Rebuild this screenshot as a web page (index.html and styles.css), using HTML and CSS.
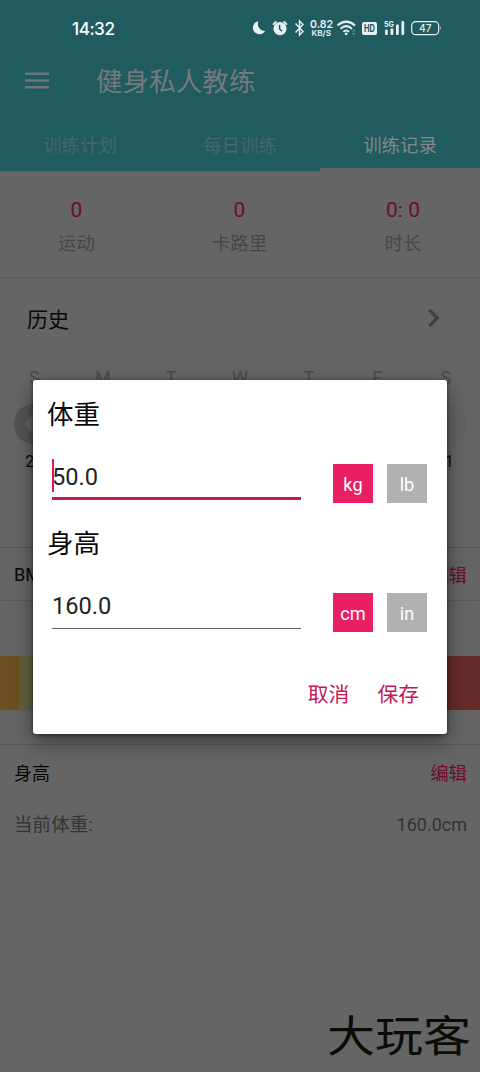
FILE: index.html
```html
<!DOCTYPE html>
<html lang="zh-CN">
<head>
<meta charset="utf-8">
<title>健身私人教练</title>
<link rel="stylesheet" href="styles.css">
</head>
<body>
<div class="screen">
  <header class="header">
    <div class="status">
      <span class="clock">14:32</span>
      <svg class="status-icons" width="210" height="24" viewBox="0 0 210 24">
        <g fill="#e6f1f2">
          <path d="M10.3 5.2A6.6 6.6 0 1 0 17.2 15A7.2 7.2 0 0 1 10.3 5.2Z"/>
          <circle cx="32" cy="12.6" r="6.6"/>
          <path d="M25 8.7L28.5 5.3M35.5 5.3L39 8.7" stroke="#e6f1f2" stroke-width="1.8" fill="none"/>
          <path d="M31.6 8.8V13L34 15.2" stroke="#205b60" stroke-width="1.5" fill="none"/>
          <path d="M47.5 7.5L55 15.5L51.5 19V5L55 8.5L47.5 16.5" stroke="#e6f1f2" stroke-width="1.4" fill="none"/>
          <text x="62" y="12" class="net" textLength="23" lengthAdjust="spacingAndGlyphs">0.82</text>
          <text x="63.5" y="20" class="unit" textLength="19.5" lengthAdjust="spacingAndGlyphs">KB/S</text>
          <g fill="none" stroke="#e6f1f2" stroke-width="2">
            <path d="M89.5 9.5Q98.2 1.8 107 9.5"/>
            <path d="M92.5 12.7Q98.2 7.6 104 12.7"/>
            <path d="M95.3 15.7Q98.2 13.2 101 15.7"/>
          </g>
          <circle cx="98.2" cy="17.8" r="1.4"/>
          <path d="M103.7 15.5L105.7 13L107.7 15.5ZM103.7 17L105.7 19.5L107.7 17Z" opacity=".3"/>
          <rect x="114" y="6" width="15" height="13" rx="2"/>
          <text x="116" y="16.2" class="hd" textLength="11" lengthAdjust="spacingAndGlyphs">HD</text>
          <text x="136" y="11" class="gen" textLength="10" lengthAdjust="spacingAndGlyphs">5G</text>
          <rect x="137" y="13.5" width="2.8" height="5.5" rx="1"/>
          <rect x="142.5" y="12.5" width="2.8" height="6.5" rx="1"/>
          <rect x="148" y="8.5" width="2.8" height="10.5" rx="1"/>
          <rect x="153.4" y="5" width="2.8" height="14" rx="1"/>
          <rect x="163.7" y="5.7" width="27" height="13" rx="4" fill="none" stroke="#e6f1f2" stroke-width="1.2"/>
          <path d="M192 10Q193.6 12.3 192 14.6Z"/>
          <text x="171" y="16" class="charge" textLength="12.5" lengthAdjust="spacingAndGlyphs">47</text>
        </g>
      </svg>
    </div>
    <div class="appbar">
      <svg width="24" height="17" viewBox="0 0 24 17"><path d="M0 1.7H24M0 8.5H24M0 15.3H24" stroke="#6d7678" stroke-width="2.6"/></svg>
      <h1 class="title">健身私人教练</h1>
    </div>
    <nav class="tabs">
      <span class="tab">训练计划</span>
      <span class="tab">每日训练</span>
      <span class="tab active">训练记录</span>
    </nav>
  </header>

  <section class="stats">
    <div class="stat"><b class="value">0</b><span class="label">运动</span></div>
    <div class="stat"><b class="value">0</b><span class="label">卡路里</span></div>
    <div class="stat"><b class="value">0: 0</b><span class="label">时长</span></div>
  </section>

  <section class="history">
    <div class="history-head">
      <span>历史</span>
      <svg width="14" height="20" viewBox="0 0 14 20"><path d="M2.2 1.8L10.2 10L2.2 18.2" fill="none" stroke="#414141" stroke-width="3.4"/></svg>
    </div>
    <div class="week">
      <div class="day"><span class="name">S</span><i class="dot today"></i><span>26</span></div>
      <div class="day"><span class="name">M</span><i class="dot"></i></div>
      <div class="day"><span class="name">T</span><i class="dot"></i></div>
      <div class="day"><span class="name">W</span><i class="dot"></i></div>
      <div class="day"><span class="name">T</span><i class="dot"></i></div>
      <div class="day"><span class="name">F</span><i class="dot"></i></div>
      <div class="day last"><span class="name">S</span><i class="dot"></i><span>1</span></div>
    </div>
  </section>

  <section class="row bmi-head"><span>BMI</span><span class="edit">编辑</span></section>
  <section class="bmi">
    <div class="scale"><i class="low"></i><i class="light"></i><i class="mid"></i><i class="high"></i></div>
  </section>
  <section class="body">
    <div class="row height-head"><span>身高</span><span class="edit">编辑</span></div>
    <div class="row current"><span class="current-label">当前体重:</span><span>160.0cm</span></div>
  </section>
  <footer class="mark">大玩客</footer>
</div>

<div class="dialog">
  <h2 class="heading">体重</h2>
  <div class="field">
    <div class="input focused"><i class="caret"></i>50.0</div>
    <div class="units"><span class="unit-btn on">kg</span><span class="unit-btn">lb</span></div>
  </div>
  <h2 class="heading second">身高</h2>
  <div class="field">
    <div class="input">160.0</div>
    <div class="units"><span class="unit-btn on">cm</span><span class="unit-btn">in</span></div>
  </div>
  <div class="actions"><span>取消</span><span>保存</span></div>
</div>
</body>
</html>
```
FILE: styles.css
```css
* { box-sizing: border-box; }
body {
  margin: 0;
  font-family: Roboto, "Noto Sans CJK SC", sans-serif;
  font-size: 18px;
  color: #080808;
}
.screen {
  width: 480px;
  height: 1072px;
  background: #656565;
  display: flex;
  flex-direction: column;
  overflow: hidden;
}
.header { height: 171px; background: #205b60; flex: none; }
.status {
  height: 56px;
  padding: 0 22px 0 72px;
  display: flex;
  align-items: center;
  justify-content: space-between;
}
.clock { color: #fff; font: 500 17.2px Inter, sans-serif; letter-spacing: -0.5px; }
.status-icons { flex: none; }
.net { font: 600 11px Inter, sans-serif; }
.unit { font: 600 8px Inter, sans-serif; }
.hd { font: 700 10px Inter, sans-serif; fill: #205b60; }
.gen { font: 700 8px Inter, sans-serif; }
.charge { font: 500 11px Inter, sans-serif; }
.appbar {
  height: 50px;
  padding-left: 25px;
  display: flex;
  align-items: center;
  gap: 47px;
}
.appbar svg { margin-top: -2px; }
.title { margin: 0; font-size: 26.6px; font-weight: 400; line-height: 50px; padding-top: 2px; color: #747a7c; }
.tabs { height: 65px; display: flex; }
.tab { flex: 1; height: 65px; line-height: 80px; text-align: center; font-size: 18.4px; color: #46696c; }
.active { color: #858889; border-bottom: 3px solid #656565; }

.stats {
  height: 107px;
  flex: none;
  padding: 0 4px;
  border-bottom: 1px solid #5b5b5b;
  display: grid;
  grid-template-columns: 145px 1fr 146px;
}
.stat { display: flex; flex-direction: column; align-items: center; padding-top: 24px; }
.value { font-size: 21px; font-weight: 400; line-height: 30px; color: #6c0d2c; }
.label { font-size: 18.4px; line-height: 37px; color: #464646; }

.history { height: 270px; flex: none; border-bottom: 1px solid #565656; }
.history-head {
  height: 82px;
  padding: 0 39px 2px 27px;
  display: flex;
  align-items: center;
  justify-content: space-between;
  font-size: 21px;
}
.week { display: grid; grid-template-columns: repeat(7, 68.6px); }
.day { display: flex; flex-direction: column; align-items: center; font-size: 16px; line-height: 20px; padding-top: 8px; }
.name { font-size: 18px; color: #494949; }
.dot { width: 40px; height: 40px; margin: 16px 0 8px; border-radius: 50%; border: 1px solid #616161; background: #646464; }
.today { border: 12px solid #535456; }
.last span:last-child { padding-left: 7px; }

.row { display: flex; align-items: center; justify-content: space-between; padding: 0 13px 0 14px; }
.edit { color: #6c0d2c; font-size: 18.4px; }
.bmi-head { height: 53px; flex: none; border-bottom: 1px solid #5b5b5b; }
.bmi { height: 144px; flex: none; padding-top: 55px; border-bottom: 1px solid #565656; }
.scale { height: 54px; display: flex; }
.low { width: 19px; background: #6b5022; }
.light { width: 61px; background: #64603c; }
.mid { flex: 1; background: #3f6140; }
.high { width: 80px; background: #672b2b; }
.body { height: 105px; flex: none; border-bottom: 1px solid #606060; }
.height-head { height: 53px; }
.current { height: 52px; color: #333; }
.current-label { font-size: 18.4px; letter-spacing: .2px; margin-top: -2px; }
.mark {
  margin-top: auto;
  height: 69px;
  padding-right: 9px;
  text-align: right;
  font-size: 48px;
  line-height: 69px;
  color: #0c0c07;
  transform: scaleY(.9);
}

.dialog {
  position: absolute;
  left: 33px;
  top: 380px;
  width: 414px;
  height: 354px;
  padding: 16px 20px 0 14px;
  background: #fff;
  border-radius: 3px;
  box-shadow: 0 8px 22px rgba(0, 0, 0, .4), 0 1px 4px rgba(0, 0, 0, .5);
}
.heading { margin: 0; font-size: 26.5px; font-weight: 400; line-height: 38px; }
.second { margin-top: 15px; }
.field { height: 76px; display: flex; justify-content: space-between; padding: 23px 0 0 5px; }
.input {
  position: relative;
  width: 249px;
  height: 43px;
  border-bottom: 1px solid #606060;
  font-size: 23.6px;
  line-height: 40px;
  color: #222;
}
.focused { border-bottom: 3px solid #c21858; }
.caret { position: absolute; left: 0; top: 2px; width: 2px; height: 33px; background: #d81b60; }
.units { display: flex; gap: 14px; padding-top: 7px; }
.unit-btn { width: 40px; height: 39px; background: #b1b1b1; color: #fff; font-size: 18.2px; line-height: 41px; text-align: center; }
.on { background: #e91e63; }
.actions { display: flex; justify-content: flex-end; gap: 28px; margin-top: 39px; padding-right: 8px; font-size: 20.8px; line-height: 34px; color: #c2185b; }
```
